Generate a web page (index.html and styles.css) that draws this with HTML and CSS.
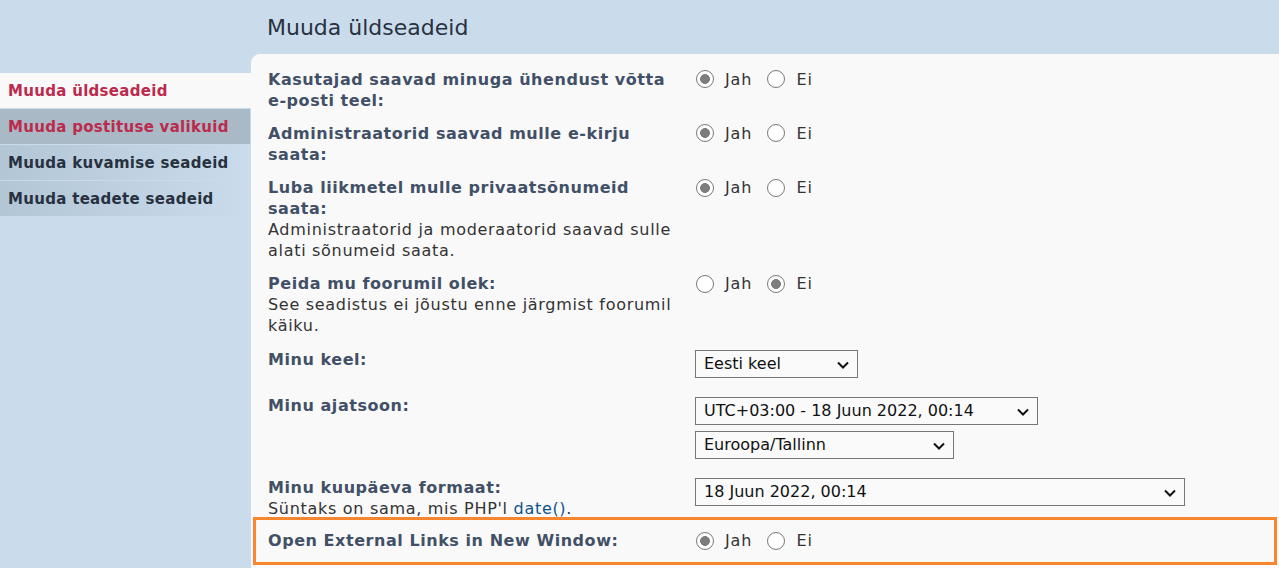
FILE: index.html
```html
<!DOCTYPE html>
<html lang="et">
<head>
<meta charset="utf-8">
<title>Muuda üldseadeid</title>
<link rel="stylesheet" href="styles.css">
</head>
<body>
<div class="page">
  <h2 class="title">Muuda üldseadeid</h2>
  <div class="body">
    <nav class="tabs">
      <a class="tab active" href="#">Muuda üldseadeid</a>
      <a class="tab hover" href="#">Muuda postituse valikuid</a>
      <a class="tab" href="#">Muuda kuvamise seadeid</a>
      <a class="tab" href="#">Muuda teadete seadeid</a>
    </nav>
    <main class="panel">
      <dl class="row">
        <dt><label class="lbl">Kasutajad saavad minuga ühendust võtta e-posti teel:</label></dt>
        <dd><label class="opt"><input type="radio" name="r1" checked> Jah</label><label class="opt"><input type="radio" name="r1"> Ei</label></dd>
      </dl>
      <dl class="row">
        <dt><label class="lbl">Administraatorid saavad mulle e-kirju saata:</label></dt>
        <dd><label class="opt"><input type="radio" name="r2" checked> Jah</label><label class="opt"><input type="radio" name="r2"> Ei</label></dd>
      </dl>
      <dl class="row">
        <dt><label class="lbl">Luba liikmetel mulle privaatsõnumeid saata:</label><span class="desc">Administraatorid ja moderaatorid saavad sulle alati sõnumeid saata.</span></dt>
        <dd><label class="opt"><input type="radio" name="r3" checked> Jah</label><label class="opt"><input type="radio" name="r3"> Ei</label></dd>
      </dl>
      <dl class="row">
        <dt><label class="lbl">Peida mu foorumil olek:</label><span class="desc">See seadistus ei jõustu enne järgmist foorumil käiku.</span></dt>
        <dd><label class="opt"><input type="radio" name="r4"> Jah</label><label class="opt"><input type="radio" name="r4" checked> Ei</label></dd>
      </dl>
      <dl class="row">
        <dt><label class="lbl">Minu keel:</label></dt>
        <dd class="stack one"><span class="sel w1"><select><option>Eesti keel</option></select><svg class="chev" viewBox="0 0 12 8"><path d="M1 1.5l5 5 5-5" /></svg></span></dd>
      </dl>
      <dl class="row">
        <dt><label class="lbl">Minu ajatsoon:</label></dt>
        <dd class="stack two"><span class="sel w2"><select><option>UTC+03:00 - 18 Juun 2022, 00:14</option></select><svg class="chev" viewBox="0 0 12 8"><path d="M1 1.5l5 5 5-5" /></svg></span><span class="sel w3"><select><option>Euroopa/Tallinn</option></select><svg class="chev" viewBox="0 0 12 8"><path d="M1 1.5l5 5 5-5" /></svg></span></dd>
      </dl>
      <dl class="row">
        <dt><label class="lbl">Minu kuupäeva formaat:</label><span class="desc">Süntaks on sama, mis PHP'l <a class="link" href="#">date()</a>.</span></dt>
        <dd class="stack three"><span class="sel w4"><select><option>18 Juun 2022, 00:14</option></select><svg class="chev" viewBox="0 0 12 8"><path d="M1 1.5l5 5 5-5" /></svg></span></dd>
      </dl>
      <div class="highlight">
        <dl class="row">
          <dt><label class="lbl">Open External Links in New Window:</label></dt>
          <dd><label class="opt"><input type="radio" name="r5" checked> Jah</label><label class="opt"><input type="radio" name="r5"> Ei</label></dd>
        </dl>
      </div>
    </main>
  </div>
</div>
</body>
</html>
```

FILE: styles.css
```css
* { box-sizing: border-box; }
html, body { margin: 0; padding: 0; }
body {
  background: #cadceb;
  font-family: Verdana, "DejaVu Sans", sans-serif;
  font-size: 16px;
  color: #333333;
  overflow: hidden;
}
.page { width: 1279px; height: 568px; display: flex; flex-direction: column; }
.title {
  margin: 0;
  height: 54px;
  padding-left: 267px;
  font-size: 22px;
  font-weight: normal;
  line-height: 55px;
  color: #28313f;
}
.body { flex: 1; display: flex; }
.tabs {
  width: 251px;
  flex: none;
  padding-top: 19px;
  display: flex;
  flex-direction: column;
  gap: 1px;
}
.tab {
  display: block;
  height: 35px;
  line-height: 36px;
  padding-left: 8px;
  font-weight: bold;
  font-size: 15px;
  letter-spacing: 0.3px;
  text-decoration: none;
  color: #28313f;
  background: linear-gradient(to right, #b3c6d6, #cadceb);
  margin-right: 1px;
}
.tab.active { background: #f9f9f9; color: #bc2a4d; margin-right: 0; }
.tab.hover { background: #a9b9c5; color: #bc2a4d; }
.panel {
  flex: 1;
  background: #f9f9f9;
  border-top-left-radius: 9px;
  padding: 14.5px 0 0 17px;
}
.row {
  display: flex;
  margin: 0 0 12.3px 0;
  line-height: 21px;
}
.row dt { width: 412px; flex: none; }
.row dd { margin: 0 0 0 15px; }
.lbl { display: block; font-weight: bold; color: #425067; letter-spacing: 0.55px; }
.desc { display: block; color: #333333; letter-spacing: 0.7px; }
.link { color: #105289; text-decoration: none; }
.opt {
  display: inline-flex;
  align-items: center;
  height: 21px;
  color: #333333;
  letter-spacing: 0.9px;
  margin-right: 14px;
}
.opt input {
  appearance: none;
  -webkit-appearance: none;
  width: 18px;
  height: 18px;
  margin: 0 11px 0 1px;
  border: 1px solid #7a7a7a;
  border-radius: 50%;
  background: #ffffff;
}
.opt input:checked {
  background: radial-gradient(circle, #7d7d7d 0 4.6px, #ffffff 5.2px);
}
.stack { display: flex; flex-direction: column; align-items: flex-start; gap: 6px; }
.stack.one { padding: 1px 0 5.5px 0; }
.stack.two { padding: 1.5px 0 6px 0; }
.stack.three { padding: 0.5px 0 0 0; }
.sel { position: relative; display: block; }
.sel select {
  appearance: none;
  -webkit-appearance: none;
  display: block;
  height: 28px;
  border: 1px solid #767676;
  border-radius: 0;
  background: #fafafa;
  font-family: Verdana, "DejaVu Sans", sans-serif;
  font-size: 16px;
  color: #111111;
  padding: 0 8px;
  width: 100%;
}
.w1 { width: 163px; }
.w2 { width: 343px; }
.w3 { width: 259px; }
.w4 { width: 490px; }
.chev {
  position: absolute;
  right: 9px;
  top: 11px;
  width: 12px;
  height: 8px;
  pointer-events: none;
}
.chev path { fill: none; stroke: #111111; stroke-width: 2; }
.highlight {
  margin: -14.8px 2px 0 -15px;
  border: 3px solid #f7862f;
  padding: 10.5px 0 0 12px;
  height: 48px;
}
.highlight .row { margin: 0; }
```
